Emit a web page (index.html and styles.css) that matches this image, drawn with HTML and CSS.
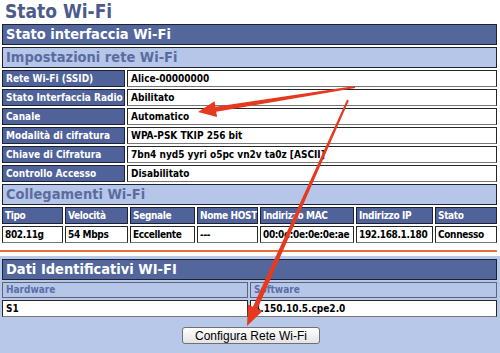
FILE: index.html
```html
<!DOCTYPE html>
<html lang="it">
<head>
    <meta charset="UTF-8">
    <meta name="viewport" content="width=device-width, initial-scale=1.0">
    <title>Stato Wi-Fi</title>
    <link rel="stylesheet" href="styles.css">
</head>
<body>
    <div class="page">
        <h1 class="title">Stato Wi-Fi</h1>

        <table class="grid">
            <col class="col-label">
            <col class="col-value">
            <tr><th colspan="2" class="bar-dark">Stato interfaccia Wi-Fi</th></tr>
            <tr><th colspan="2" class="bar-light">Impostazioni rete Wi-Fi</th></tr>
            <tr><td class="label">Rete Wi-Fi (SSID)</td><td class="value">Alice-00000000</td></tr>
            <tr><td class="label">Stato Interfaccia Radio</td><td class="value">Abilitato</td></tr>
            <tr><td class="label">Canale</td><td class="value">Automatico</td></tr>
            <tr><td class="label">Modalità di cifratura</td><td class="value">WPA-PSK TKIP 256 bit</td></tr>
            <tr><td class="label">Chiave di Cifratura</td><td class="value">7bn4 nyd5 yyri o5pc vn2v ta0z [ASCII]</td></tr>
            <tr><td class="label">Controllo Accesso</td><td class="value">Disabilitato</td></tr>
        </table>

        <table class="grid joined conn">
            <col style="width: 61px">
            <col style="width: 63px">
            <col style="width: 65px">
            <col style="width: 61px">
            <col style="width: 94px">
            <col style="width: 77px">
            <col style="width: 62px">
            <tr><th colspan="7" class="bar-light">Collegamenti Wi-Fi</th></tr>
            <tr>
                <td class="label">Tipo</td>
                <td class="label">Velocità</td>
                <td class="label">Segnale</td>
                <td class="label">Nome HOST</td>
                <td class="label">Indirizzo MAC</td>
                <td class="label">Indirizzo IP</td>
                <td class="label">Stato</td>
            </tr>
            <tr>
                <td class="value">802.11g</td>
                <td class="value">54 Mbps</td>
                <td class="value">Eccellente</td>
                <td class="value">---</td>
                <td class="value">00:0e:0e:0e:0e:ae</td>
                <td class="value">192.168.1.180</td>
                <td class="value">Connesso</td>
            </tr>
        </table>

        <div class="divider"></div>

        <div class="ident">
            <table class="grid">
                <col class="col-half-l">
                <col class="col-half-r">
                <tr><th colspan="2" class="bar-dark">Dati Identificativi WI-FI</th></tr>
                <tr><td class="sub">Hardware</td><td class="sub">Software</td></tr>
                <tr><td class="value">S1</td><td class="value">4.150.10.5.cpe2.0</td></tr>
            </table>
            <div class="actions">
                <button class="btn">Configura Rete Wi-Fi</button>
            </div>
        </div>

        <svg class="arrows" width="500" height="353" viewBox="0 0 500 353">
            <polygon points="354.8,86 215.4,106.7 214.5,101.3 198,112 217.1,117.1 216.2,111.7 355.2,88" />
            <polygon points="347.1,99.6 252.9,306.7 247.9,304.4 247,326 262.5,311 257.5,308.7 348.9,100.4" />
        </svg>
    </div>
</body>
</html>
```

FILE: styles.css
```css
body {
    margin: 0;
    padding: 0;
    background-color: #fff;
    font-family: Tahoma, "DejaVu Sans Condensed", "DejaVu Sans", sans-serif;
    font-size: 10px;
    color: #000;
}

.page {
    position: relative;
    width: 500px;
    height: 353px;
    overflow: hidden;
}

.title {
    margin: 0;
    padding-left: 5px;
    font-size: 19px;
    line-height: 22px;
    color: #4b5b8c;
}

.grid {
    width: 499px;
    table-layout: fixed;
    border-collapse: separate;
    border-spacing: 2px;
}

.joined {
    margin-top: -2px;
}

.col-label { width: 123px; }
.col-value { width: 370px; }
.col-half-l { width: 246px; }
.col-half-r { width: 247px; }

.grid th,
.grid td {
    padding: 0 3px;
    text-align: left;
    white-space: nowrap;
    overflow: hidden;
    font-weight: bold;
}

.conn td {
    padding: 0 2px;
    letter-spacing: -0.35px;
}

.bar-dark,
.bar-light {
    height: 19px;
    font-size: 14.5px;
    line-height: 19px;
    border: 1px solid #1d2233;
}

.bar-dark {
    background-color: #53679d;
    color: #fff;
}

.bar-light {
    background-color: #b5c6e8;
    color: #5a6c9f;
}

.label,
.value,
.sub {
    height: 15px;
    line-height: 15px;
    border: 1px solid #262626;
}

.label {
    background-color: #4f639a;
    color: #fff;
    border-color: #1d2233;
}

.value {
    background-color: #fff;
    border-bottom-color: #777;
}

.sub {
    height: 14px;
    line-height: 14px;
    background-color: #b5c6e8;
    color: #5b6ea6;
    border-color: #5a6578;
}

.divider {
    width: 497px;
    height: 2px;
    margin-top: 5px;
    background-color: #e8703a;
}

.ident {
    margin-top: 4px;
    padding: 1px 0 10px;
    background-color: #b8c8e8;
}

.actions {
    margin-top: 8px;
    text-align: center;
}

.btn {
    width: 138px;
    height: 17px;
    padding: 0;
    font-family: "Liberation Sans", Arial, sans-serif;
    font-size: 12px;
    color: #000;
    background: linear-gradient(#ffffff, #e4e4e4);
    border: 1px solid #707070;
    border-radius: 3px;
    margin-left: 2px;
}

.arrows {
    position: absolute;
    left: 0;
    top: 0;
    fill: #e53a1f;
    pointer-events: none;
}
```
